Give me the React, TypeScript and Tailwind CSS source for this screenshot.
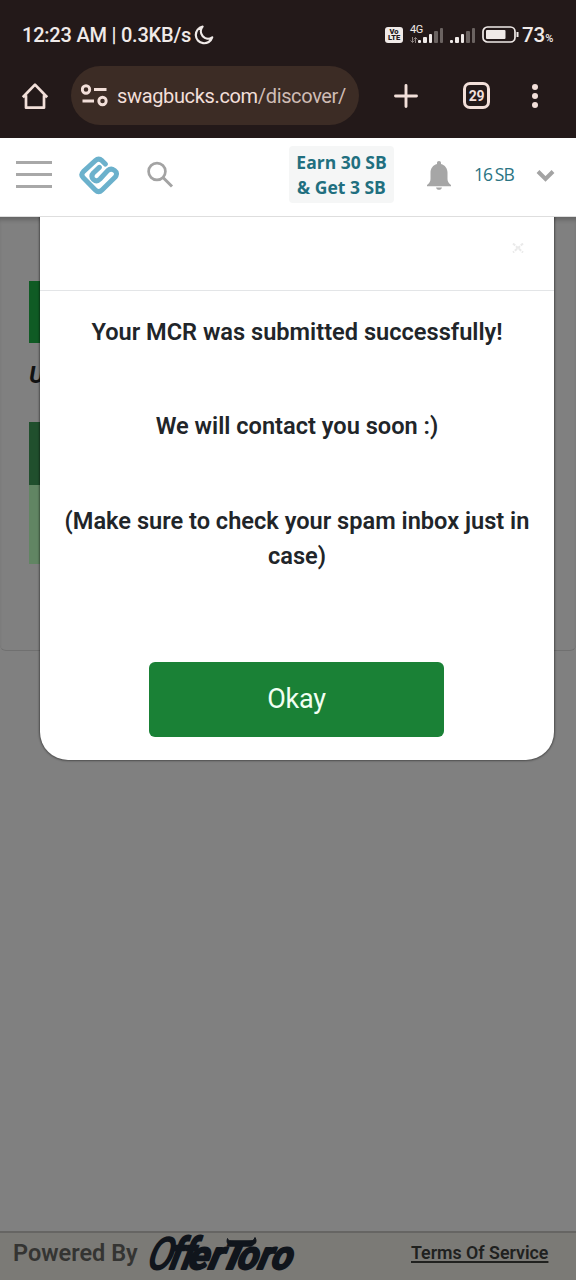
const SIGNAL_HEIGHTS = [3, 6, 9, 12, 15];

function SignalBars() {
  return (
    <div className="flex h-[16px] items-end gap-[2px]">
      {SIGNAL_HEIGHTS.map((height, i) => (
        <span
          key={height}
          className={
            i < 3
              ? "w-[3.4px] rounded-[1px] bg-[#f0eae8]"
              : "w-[3.4px] rounded-[1px] bg-[#6b6361]"
          }
          style={{ height }}
        />
      ))}
    </div>
  );
}

function MoonIcon() {
  return (
    <svg width="20" height="20" viewBox="0 0 20 20" fill="none" stroke="#f0eae8" strokeWidth="2.2" strokeLinejoin="round">
      <path d="M8.6 1.6A8.4 8.4 0 1 0 18.2 12.4 7.3 7.3 0 0 1 8.6 1.6Z" />
    </svg>
  );
}

function VolteBadge() {
  return (
    <div className="flex h-[16px] w-[18px] flex-col items-center justify-center rounded-[3px] bg-[#f0eae8] text-[7.5px] leading-[6.5px] font-black text-[#231919]">
      <span>Vo</span>
      <span>LTE</span>
    </div>
  );
}

function StatusBar() {
  return (
    <div className="flex h-[66px] items-start pt-[23px] pr-[22px] pl-[22px] text-[#f0eae8]">
      <span className="w-[168px] text-[20px] leading-[24px] font-medium tracking-[-0.22px] whitespace-nowrap">
        12:23 AM | 0.3KB/s
      </span>
      <div className="mt-[2px] ml-[4px]">
        <MoonIcon />
      </div>
      <div className="mt-[4px] ml-[171px]">
        <VolteBadge />
      </div>
      <div className="mt-[2px] ml-[7px] flex h-[18px] w-[7px] flex-col justify-between whitespace-nowrap">
        <span className="text-[11px] leading-[10px] tracking-[-0.5px]">4G</span>
        <svg className="shrink-0" width="8" height="6" viewBox="0 0 8 6" fill="none" stroke="#8b8280" strokeWidth="1">
          <path d="M2.5 0v5.5M.6 3.5l1.9 2 1.9-2M5.5 6V.5M3.8 2.4 5.5.5l1.9 1.9" />
        </svg>
      </div>
      <div className="mt-[4px] ml-[1px]">
        <SignalBars />
      </div>
      <div className="mt-[4px] ml-[7px]">
        <SignalBars />
      </div>
      <svg className="mt-[3px] ml-[7px] shrink-0" width="37" height="17" viewBox="0 0 37 17" fill="none">
        <rect x="1" y="1" width="32" height="15" rx="4.5" stroke="#f0eae8" strokeWidth="1.7" />
        <rect x="4" y="4" width="19.5" height="9" rx="1" fill="#f0eae8" />
        <path d="M35.5 6v5" stroke="#f0eae8" strokeWidth="2" />
      </svg>
      <span className="ml-[3px] text-[20.5px] leading-[24px] font-medium whitespace-nowrap">
        73<span className="text-[11px]">%</span>
      </span>
    </div>
  );
}

function BrowserToolbar() {
  return (
    <div className="flex h-[59px] items-center pl-[21px]">
      <svg width="28" height="28" viewBox="0 0 28 28" fill="none" stroke="#f2dfd9" strokeWidth="2.7" strokeLinejoin="round">
        <path d="M5 13.2v12.5h18V13.2M1.8 15.2 14 2.6l12.2 12.6" />
      </svg>
      <div className="ml-[22px] flex h-[59px] w-[288px] shrink-0 items-center rounded-full bg-[#3c2c25] pl-[10px]">
        <svg width="27" height="23" viewBox="0 0 27 23" fill="none" stroke="#f2dfd9" strokeWidth="2.9">
          <circle cx="5" cy="5.5" r="3.7" />
          <path d="M13 5.5h12.5M1.5 17h11.5" />
          <circle cx="21.5" cy="17" r="3.7" />
        </svg>
        <span className="ml-[9px] text-[20px] leading-[24px] tracking-[-0.35px] whitespace-nowrap text-[#f2dfd9]">
          swagbucks.com<span className="text-[#cfbcb5]">/discover/</span>
        </span>
      </div>
      <svg className="ml-[35px]" width="24" height="24" viewBox="0 0 24 24" stroke="#f2dfd9" strokeWidth="2.9" strokeLinecap="round">
        <path d="M12 1.5v21M1.5 12h21" />
      </svg>
      <div className="ml-[45px] flex size-[27px] items-center justify-center rounded-[7px] border-[3px] border-[#f2dfd9] text-[14px] leading-none font-bold tracking-[-0.4px] text-[#f2dfd9]">
        29
      </div>
      <div className="ml-[42px] flex flex-col gap-[3px]">
        <span className="size-[6px] rounded-full bg-[#f2dfd9]" />
        <span className="size-[6px] rounded-full bg-[#f2dfd9]" />
        <span className="size-[6px] rounded-full bg-[#f2dfd9]" />
      </div>
    </div>
  );
}

function SwagbucksLogo() {
  return (
    <svg width="40" height="39" viewBox="0 0 120 117" fill="none" stroke="#6bb1cc" strokeWidth="15" strokeLinecap="round" strokeLinejoin="round">
      <path d="M79 24 69 14Q59 5 49 14L13 47Q4 56 13 65L49 102Q59 112 69 102L108 64Q118 52 106 43Q96 35 86 44L63 69Q53 79 44 71Q34 61 43 51L61 34" />
    </svg>
  );
}

function SiteHeader() {
  return (
    <header className="relative z-20 flex h-[79px] items-center border-b border-[#dedede] bg-white pl-[16px] font-['Open_Sans',sans-serif]">
      <div className="mt-[-5px] flex w-[36px] flex-col gap-[9px]">
        <span className="h-[3px] bg-[#a8a8a8]" />
        <span className="h-[3px] bg-[#a8a8a8]" />
        <span className="h-[3px] bg-[#a8a8a8]" />
      </div>
      <div className="mt-[-4px] ml-[27px]">
        <SwagbucksLogo />
      </div>
      <svg className="mt-[-5px] ml-[27px]" width="28" height="27" viewBox="0 0 28 27" fill="none" stroke="#a3a3a3" strokeWidth="2.7">
        <circle cx="11" cy="10.5" r="8.4" />
        <path d="m17 16.5 9 9" strokeWidth="3" />
      </svg>
      <div className="mt-[-5px] ml-[115px] flex h-[57px] w-[105px] shrink-0 flex-col items-center justify-center rounded-[4px] bg-[#f5f6f6] text-[17.5px] leading-[25px] font-bold whitespace-nowrap text-[#216f7f]">
        <span>Earn 30 SB</span>
        <span>&amp; Get 3 SB</span>
      </div>
      <svg className="mt-[-3px] ml-[33px]" width="24" height="29" viewBox="0 0 24 29" fill="#a6a6a6">
        <path d="M12 0c-1.3 0-2 .9-2 2v1C6 4 3.5 7.5 3.5 11.5V18c0 2.5-1.2 4.2-3.5 6v1.2h24V24c-2.3-1.8-3.5-3.5-3.5-6v-6.5C20.5 7.5 18 4 14 3V2c0-1.1-.7-2-2-2ZM9 26.5h6c-.4 1.5-1.5 2.3-3 2.3s-2.6-.8-3-2.3Z" />
      </svg>
      <span className="mt-[-6px] ml-[23px] w-[41px] text-[17.5px] leading-[24px] tracking-[-0.9px] whitespace-nowrap text-[#2b7483] [word-spacing:-1px]">
        16 SB
      </span>
      <svg className="mt-[-4px] ml-[21px]" width="19" height="13" viewBox="0 0 19 13" fill="none" stroke="#a3a3a3" strokeWidth="4">
        <path d="m2 2.5 7.5 7.5L17 2.5" />
      </svg>
    </header>
  );
}

function ConfirmationModal() {
  return (
    <div className="absolute top-0 left-[40px] z-10 flex h-[543px] w-[514px] flex-col items-center rounded-b-[28px] bg-white text-center text-[23.6px] leading-[35px] font-semibold text-[#212529] shadow-[0_0_2px_1px_rgba(0,0,0,0.4)]">
      <div className="flex h-[74px] w-full shrink-0 items-start justify-end border-b border-[#e3e5e7] pt-[26px] pr-[30px]">
        <svg width="12" height="10" viewBox="0 0 12 10" stroke="#eaeaea" strokeWidth="2" strokeDasharray="3 1">
          <path d="m1 .5 10 9M11 .5l-10 9" />
        </svg>
      </div>
      <p className="mt-[24px] whitespace-nowrap">Your MCR was submitted successfully!</p>
      <p className="mt-[59px] whitespace-nowrap">We will contact you soon :)</p>
      <p className="mt-[60px] whitespace-nowrap">
        (Make sure to check your spam inbox just in
        <br />
        case)
      </p>
      <button
        type="button"
        className="mt-[88px] mr-[1px] h-[75px] w-[295px] shrink-0 rounded-[6px] bg-[#1a8136] text-[27px] leading-none font-normal tracking-[-0.3px] text-[#f1fff2]"
      >
        Okay
      </button>
    </div>
  );
}

function OfferToroLogo() {
  return (
    <svg
      className="font-['Roboto',sans-serif] font-bold italic"
      width="154"
      height="47"
      viewBox="0 0 154 47"
      fill="#10151c"
      stroke="#10151c"
      strokeWidth="2"
      strokeLinejoin="round"
    >
      <g transform="translate(9 0) skewX(-14)">
        <text x="2" y="36" fontSize="44" fontWeight="400" textLength="25" lengthAdjust="spacingAndGlyphs">
          O
        </text>
        <text x="24" y="36" fontSize="44" textLength="24" lengthAdjust="spacingAndGlyphs">
          ff
        </text>
        <text x="43" y="36" fontSize="40" textLength="35" lengthAdjust="spacingAndGlyphs">
          er
        </text>
        <text x="75" y="36" fontSize="39" textLength="25" lengthAdjust="spacingAndGlyphs">
          T
        </text>
        <text x="92" y="36" fontSize="40" textLength="55" lengthAdjust="spacingAndGlyphs">
          oro
        </text>
      </g>
      {/* bull horns over the T */}
      <path
        d="M83.5 5.500c-1.500 5 1 7 6 7h16c6 0 8-4 5.500-8-1 3-3 4-7 4H90c-4 0-6-.8-6.500-3Z"
        strokeWidth="1"
      />
    </svg>
  );
}

function PageFooter() {
  return (
    <footer className="flex h-[49px] items-start border-t-2 border-[#666563] bg-[#7b7a76] pl-[13px] font-semibold">
      <span className="mt-[6px] w-[126px] text-[23.5px] leading-[28px] whitespace-nowrap text-[#343432]">
        Powered By
      </span>
      <div className="ml-[5px]">
        <OfferToroLogo />
      </div>
      <a
        href="#terms"
        className="mt-[9px] ml-[113px] text-[17.8px] leading-[22px] whitespace-nowrap text-[#20211f] underline decoration-2 underline-offset-[2px]"
      >
        Terms Of Service
      </a>
    </footer>
  );
}

export default function App() {
  return (
    <div className="flex h-[1280px] w-[576px] flex-col overflow-hidden bg-[#808080] font-['Roboto',sans-serif]">
      <div className="h-[138px] shrink-0 bg-[#231919]">
        <StatusBar />
        <BrowserToolbar />
      </div>
      <SiteHeader />
      <main className="relative flex-1">
        {/* dimmed offer page behind the modal */}
        <div className="flex h-[434px] flex-col items-start rounded-b-[6px] border-b border-[#707070] pt-[64px] pl-[29px] shadow-[inset_0_5px_4px_-2px_rgba(0,0,0,0.22)]">
          <div className="h-[62px] w-[518px] bg-[#0f5b24]" />
          <span className="mt-[17px] text-[24px] leading-[30px] font-bold text-[#111111] italic">U</span>
          <div className="mt-[32px] h-[63px] w-[518px] bg-[#204f2d]" />
          <div className="h-[79px] w-[518px] bg-[#618563]" />
        </div>
        <ConfirmationModal />
      </main>
      <PageFooter />
    </div>
  );
}
